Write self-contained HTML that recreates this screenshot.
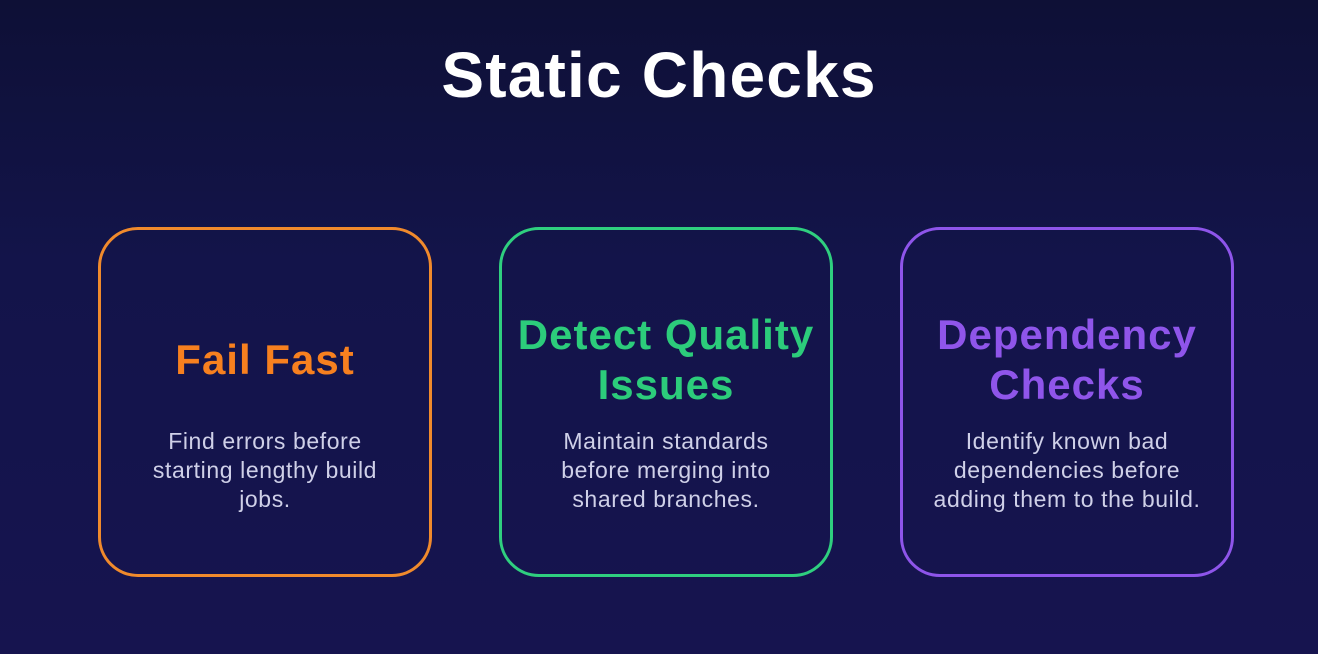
<!DOCTYPE html>
<html><head><style>
html,body{margin:0;padding:0}
body{width:1318px;height:654px;overflow:hidden;background:linear-gradient(180deg,#0e1036 0%,#13144a 40%,#16144f 100%);font-family:"Liberation Sans",sans-serif;position:relative}
h1{position:absolute;top:38px;left:0;width:1318px;text-align:center;margin:0;color:#fff;font-size:64px;font-weight:bold;letter-spacing:1.2px}
.card{position:absolute;top:227px;width:328px;height:344px;border:3px solid;border-radius:40px;box-sizing:content-box}
.t{font-weight:bold;font-size:42px;line-height:50px;text-align:center;position:absolute;left:-20px;right:-20px;letter-spacing:1px}
.d{color:#cfd0e8;font-size:23px;line-height:29px;text-align:center;position:absolute;left:-20px;right:-20px;top:197px;letter-spacing:0.6px}
</style></head><body>
<h1>Static Checks</h1>
<div class="card" style="left:98px;border-color:#f08a2c"><div class="t" style="color:#f7801f;top:105px">Fail Fast</div><div class="d">Find errors before<br>starting lengthy build<br>jobs.</div></div>
<div class="card" style="left:499px;border-color:#2fcf7f"><div class="t" style="color:#2ccc7b;top:80px">Detect Quality<br>Issues</div><div class="d">Maintain standards<br>before merging into<br>shared branches.</div></div>
<div class="card" style="left:900px;border-color:#8e55ea"><div class="t" style="color:#8f55ea;top:80px">Dependency<br>Checks</div><div class="d">Identify known bad<br>dependencies before<br>adding them to the build.</div></div>
</body></html>
